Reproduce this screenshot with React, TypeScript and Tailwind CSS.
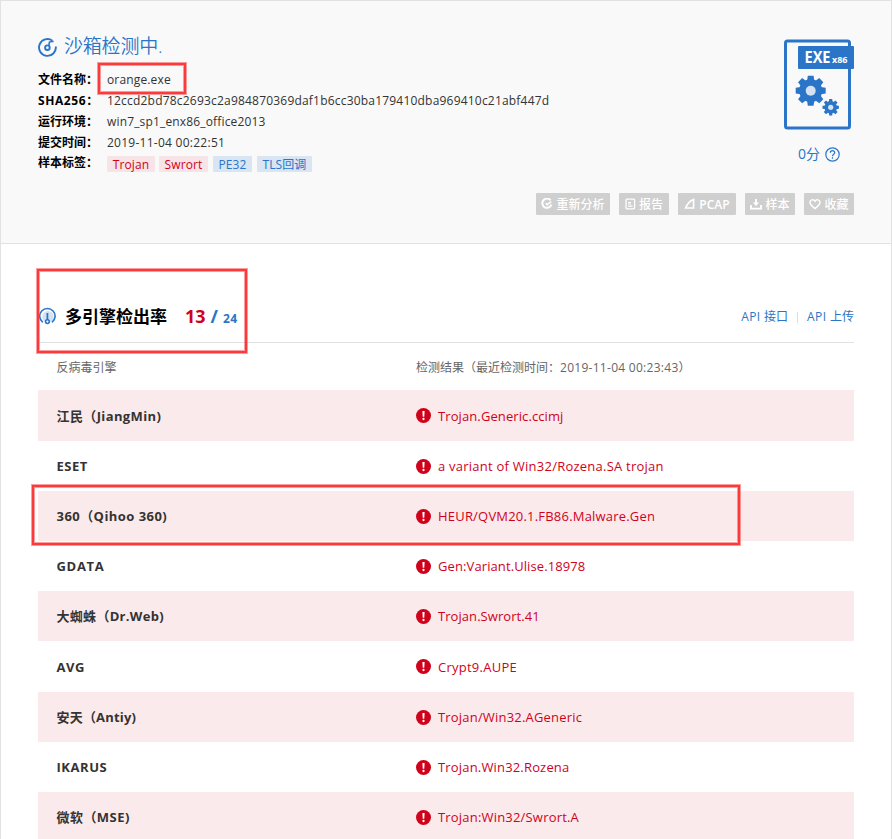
import React from "react";

const info = [
  { label: "文件名称：", value: "orange.exe", cls: "tracking-[0.15px]" },
  { label: "SHA256：", value: "12ccd2bd78c2693c2a984870369daf1b6cc30ba179410dba969410c21abf447d", cls: "tracking-[0.2px]" },
  { label: "运行环境：", value: "win7_sp1_enx86_office2013", cls: "tracking-[0.16px]" },
  { label: "提交时间：", value: "2019-11-04 00:22:51", cls: "tracking-[0.26px]" },
];

const tags = [
  { text: "Trojan", cls: "w-12 bg-[#f6e4e6] text-[#d0021b]" },
  { text: "Swrort", cls: "ml-1 w-[49px] bg-[#f6e4e6] text-[#d0021b]" },
  { text: "PE32", cls: "ml-[5px] w-[39px] bg-[#d9e5f2] text-[#2a75c7]" },
  { text: "TLS回调", cls: "ml-[5px] w-[55px] bg-[#d9e5f2] text-[#2a75c7]" },
];

const rows = [
  { name: "江民（JiangMin)", result: "Trojan.Generic.ccimj", n: "tracking-[0.38px]", r: "tracking-[0.1px]" },
  { name: "ESET", result: "a variant of Win32/Rozena.SA trojan", n: "tracking-[0.5px]", r: "tracking-[0.24px]" },
  { name: "360（Qihoo 360)", result: "HEUR/QVM20.1.FB86.Malware.Gen", n: "tracking-[0.45px]", r: "tracking-[0.2px]" },
  { name: "GDATA", result: "Gen:Variant.Ulise.18978", n: "tracking-[0.7px]", r: "tracking-[0.1px]" },
  { name: "大蜘蛛（Dr.Web)", result: "Trojan.Swrort.41", n: "tracking-[0.3px]", r: "tracking-[0.06px]" },
  { name: "AVG", result: "Crypt9.AUPE", n: "tracking-[0.6px]", r: "tracking-[0.25px]" },
  { name: "安天（Antiy)", result: "Trojan/Win32.AGeneric", n: "tracking-[0.2px]", r: "tracking-[0.19px]" },
  { name: "IKARUS", result: "Trojan.Win32.Rozena", n: "tracking-[0.55px]", r: "tracking-[0.17px]" },
  { name: "微软（MSE)", result: "Trojan:Win32/Swrort.A", n: "tracking-[0.45px]", r: "tracking-[0.19px]" },
];

function ScanIcon() {
  return (
    <svg width="20" height="20" viewBox="0 0 20 20" fill="none" stroke="#2a75c7" strokeWidth="1.9">
      <path d="M14.400 3.700A8.400 8.400 0 1 0 17.800 9.500" />
      <circle cx="9.400" cy="10.700" r="2.300" />
      <path d="M10.800 9L11.400 5.200C12.200 4.600 13.600 4.600 15.600 4.200" strokeWidth="1.600" />
    </svg>
  );
}

function GaugeIcon() {
  return (
    <svg width="18" height="18" viewBox="0 0 18 18" fill="none" stroke="#2a75c7">
      <circle cx="10" cy="9.800" r="5.800" fill="#d4e3f4" stroke="none" />
      <path d="M4.800 15.300A7.700 7.700 0 1 1 14 15.300" strokeWidth="1.600" />
      <path d="M9.400 6v7" strokeWidth="1.800" />
      <circle cx="9.400" cy="14.600" r="1.900" fill="#fff" strokeWidth="1.600" />
    </svg>
  );
}

const gear = (n: number, r1: number, r2: number, w: number) =>
  Array.from({ length: n }, (_, i) => (
    <path key={i} d={`M${-w} ${-r1}L${-w * 0.8} ${-r2}H${w * 0.8}L${w} ${-r1}Z`} transform={`rotate(${(i * 360) / n})`} />
  ));

function ExeIcon() {
  return (
    <svg width="72" height="92" viewBox="-1 0 72 92">
      <rect x="2.500" y="2" width="64" height="87" rx="2" fill="none" stroke="#2a75c7" strokeWidth="3" />
      <rect x="15" y="7" width="56" height="23" rx="1" fill="#2a75c7" />
      <text x="21.500" y="24.300" fill="#fff" fontSize="15.500" fontWeight="700" fontFamily="Open Sans, sans-serif" textLength="26" lengthAdjust="spacingAndGlyphs">EXE</text>
      <text x="49" y="23.500" fill="#fff" fontSize="9" fontWeight="700" fontFamily="Open Sans, sans-serif" textLength="15.500" lengthAdjust="spacingAndGlyphs">x86</text>
      <g fill="#2a75c7" transform="translate(27.700 51.700)">
        {gear(8, 10, 15, 3.6)}
        <circle r="11.500" />
        <circle r="5" fill="#d4e3f4" />
      </g>
      <g fill="#2a75c7" transform="translate(47.700 68.300)">
        {gear(8, 5, 8.2, 1.9)}
        <circle r="6.200" />
        <circle r="2.600" fill="#d4e3f4" />
      </g>
    </svg>
  );
}

function RefreshIcon() {
  return (
    <svg width="12" height="12" viewBox="0 0 12 12" fill="none" stroke="#fff" strokeWidth="2">
      <path d="M9.600 2.400A4.600 4.600 0 1 0 10.400 6.400" />
      <path d="M4.800 5.200L6.200 6.800L10.200 3.600" strokeWidth="1.500" />
    </svg>
  );
}
function ReportIcon() {
  return (
    <svg width="11" height="12" viewBox="0 0 11 12" fill="none" stroke="#fff" strokeWidth="1.300">
      <rect x="1" y="1.200" width="8.600" height="9.600" rx="1" />
      <path d="M3 4.500h3M3 6h3M3 8.200h4.600" strokeWidth="1.200" />
    </svg>
  );
}
function PcapIcon() {
  return (
    <svg width="12" height="12" viewBox="0 0 12 12" fill="none" stroke="#fff" strokeWidth="1.600">
      <path d="M1.600 10C3 6.500 5.500 3 9.600 1.500V10Z" />
    </svg>
  );
}
function DownloadIcon() {
  return (
    <svg width="12" height="12" viewBox="0 0 12 12" fill="none" stroke="#fff" strokeWidth="1.800">
      <path d="M1 7v3.600h10V7" />
      <path d="M6 1v5" />
      <path d="M2.900 4.400h6.200L6 8Z" fill="#fff" stroke="none" />
    </svg>
  );
}
function HeartIcon() {
  return (
    <svg width="12" height="12" viewBox="0 0 12 12" fill="none" stroke="#fff" strokeWidth="1.500">
      <path d="M6 10.600C3 8.400 1 6.600 1 4.300C1 1.700 4.500 .8 6 3.200C7.500 .8 11 1.700 11 4.300C11 6.600 9 8.400 6 10.600Z" />
    </svg>
  );
}

const buttons = [
  { icon: <RefreshIcon />, text: "重新分析", cls: "w-[74px] font-medium" },
  { icon: <ReportIcon />, text: "报告", cls: "w-[50px] font-medium" },
  { icon: <PcapIcon />, text: "PCAP", cls: "w-[58px] font-semibold" },
  { icon: <DownloadIcon />, text: "样本", cls: "w-[50px] font-medium" },
  { icon: <HeartIcon />, text: "收藏", cls: "w-[50px] font-medium" },
];

function AlertIcon() {
  return (
    <svg width="15" height="15" viewBox="0 0 15 15">
      <circle cx="7.500" cy="7.500" r="7.500" fill="#d0021b" />
      <path d="M6.400 3h2.200l-.3 5.700h-1.600Z" fill="#fff" />
      <circle cx="7.500" cy="11" r="1.150" fill="#fff" />
    </svg>
  );
}

export default function App() {
  return (
    <div className="relative h-[839px] w-[892px] overflow-hidden border-x border-t border-[#e2e2e2] bg-white font-['Open_Sans','Noto_Sans_CJK_SC',sans-serif] text-xs text-[#333]">
      <header className="flex h-[243px] flex-col border-b border-[#e2e2e2] bg-[#f9f9f9] pr-[37px] pl-[37px]">
        <div className="flex h-[192px] justify-between">
          <div className="pt-[34px]">
            <h1 className="flex h-6 items-center gap-[6px] text-[19px] font-[350] tracking-[-0.2px] whitespace-nowrap text-[#2a75c7]">
              <ScanIcon />
              <span>沙箱检测中.</span>
            </h1>
            <dl className="mt-[11px]">
              {info.map((r) => (
                <div key={r.label} className="flex h-[20.800px] items-center whitespace-nowrap">
                  <dt className={`w-[69px] font-bold text-black ${r.label === "SHA256：" ? "tracking-[0.600px]" : ""}`}>{r.label}</dt>
                  <dd className={r.cls}>{r.value}</dd>
                </div>
              ))}
              <div className="flex h-[20.800px] items-center whitespace-nowrap">
                <dt className="w-[69px] pb-px font-bold text-black">样本标签：</dt>
                <dd className="flex pt-[1px]">
                  {tags.map((t) => (
                    <span key={t.text} className={`flex h-4 items-center justify-center rounded-[1px] pt-[2px] tracking-[0.1px] ${t.cls}`}>{t.text}</span>
                  ))}
                </dd>
              </div>
            </dl>
          </div>
          <div className="flex w-[72px] flex-col items-center pt-[38px]">
            <ExeIcon />
            <div className="mt-[13px] flex items-center gap-[5px] pl-[2px] text-sm leading-5 text-[#2a75c7]">
              <span>0分</span>
              <svg width="15" height="15" viewBox="0 0 15 15" fill="none" stroke="#2a75c7" strokeWidth="1.200">
                <circle cx="7.500" cy="7.500" r="6.700" />
                <path d="M5.300 5.800C5.300 3 9.700 3 9.700 5.700C9.700 7.300 7.500 7.300 7.500 9.200M7.500 10.300v1.400" />
              </svg>
            </div>
          </div>
        </div>
        <div className="flex justify-end gap-[9px]">
          {buttons.map((b) => (
            <div key={b.text} className={`flex h-[22px] items-center justify-center gap-[3px] rounded-[1px] bg-[#cfcfcf] whitespace-nowrap text-white ${b.cls}`}>
              {b.icon}
              <span className="pt-[2px]">{b.text}</span>
            </div>
          ))}
        </div>
      </header>

      <main className="px-[37px]">
        <div className="flex h-[99px] items-center border-b border-[#e2e2e2] pt-[46px]">
          <GaugeIcon />
          <h2 className="ml-[9px] pt-[2px] text-[17px] font-bold text-black">多引擎检出率</h2>
          <div className="ml-[18px] flex items-baseline font-bold text-[#2a75c7]">
            <span className="text-lg text-[#d0021b]">13</span>
            <span className="ml-[5px] text-lg">/</span>
            <span className="ml-[5px] text-xs tracking-[0.3px]">24</span>
          </div>
          <nav className="ml-auto flex items-center pt-[2px] text-[#2a75c7]">
            <span><span className="tracking-[0.400px]">API </span>接口</span>
            <span className="mx-[9px] h-[11px] w-px bg-[#ddd]" />
            <span><span className="tracking-[0.400px]">API </span>上传</span>
          </nav>
        </div>
        <div className="flex h-[47.400px] items-center pt-[3px] text-[#666]">
          <div className="w-[378px] pl-[18.500px]">反病毒引擎</div>
          <div>检测结果（最近检测时间：<span className="tracking-[0.280px]">2019-11-04 00:23:43</span>）</div>
        </div>
        <div>
          {rows.map((r) => (
            <div key={r.name} className="flex h-[50.200px] items-center text-[13px] odd:bg-[#fbeaeb]">
              <div className={`w-[378px] pt-[1.500px] pl-[18.500px] font-bold ${r.n}`}>{r.name}</div>
              <div className="flex items-center gap-[7px] pt-[0.800px] text-[#d0021b]">
                <AlertIcon />
                <span className={`pt-[1px] ${r.r}`}>{r.result}</span>
              </div>
            </div>
          ))}
        </div>
      </main>

      <div className="absolute top-[62px] left-[97px] h-[31px] w-[88px] border-2 border-[#fb3b3b] shadow-[0_0_0_1px_#fb3b3b80,inset_0_0_0_1px_#fb3b3b80]" />
      <div className="absolute top-[268px] left-[36px] h-[84px] w-[210px] border-2 border-[#fb3b3b] shadow-[0_0_0_1px_#fb3b3b80,inset_0_0_0_1px_#fb3b3b80]" />
      <div className="absolute top-[484px] left-[31px] h-[60px] w-[708px] border-2 border-[#fb3b3b] shadow-[0_0_0_1px_#fb3b3b80,inset_0_0_0_1px_#fb3b3b80]" />
    </div>
  );
}
